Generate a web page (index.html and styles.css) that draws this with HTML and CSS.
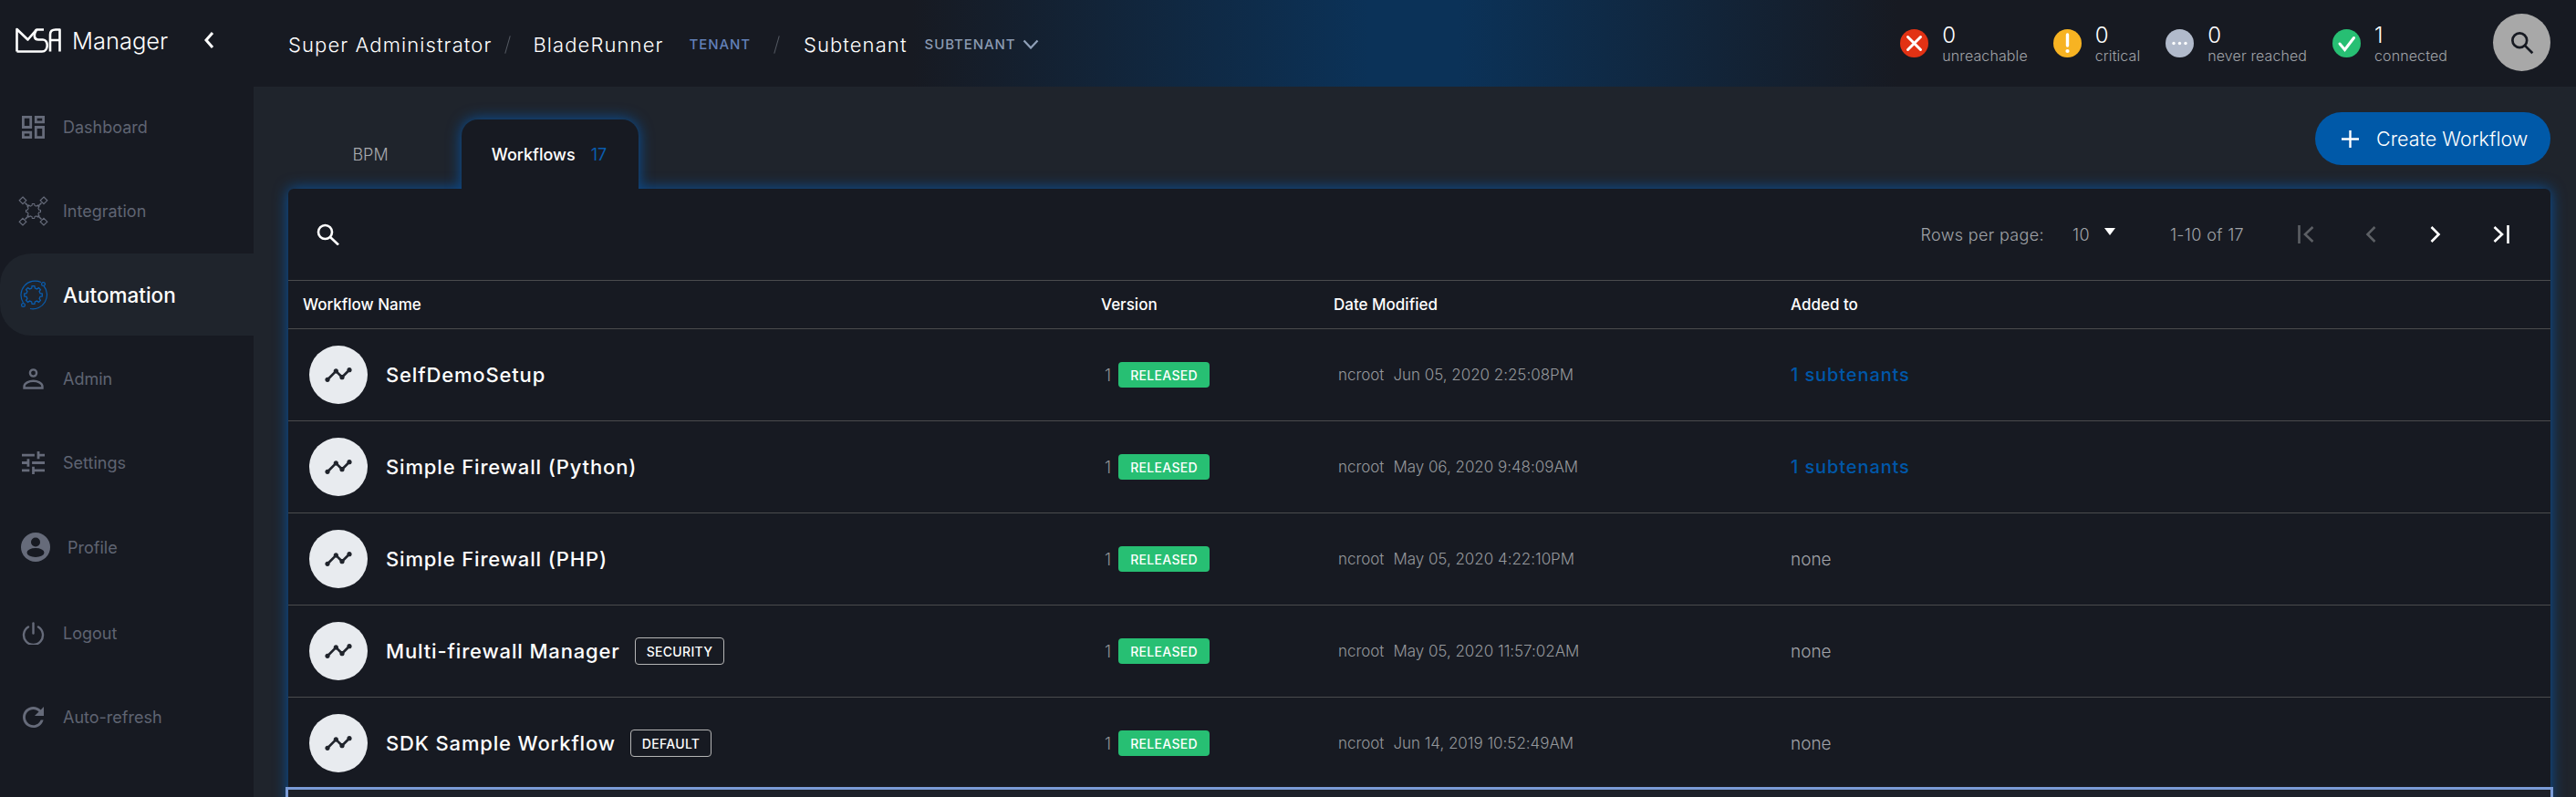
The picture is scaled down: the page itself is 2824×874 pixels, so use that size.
FILE: index.html
```html
<!DOCTYPE html>
<html lang="en">
  <head>
    <meta charset="UTF-8" />
    <title>MSA Manager - Automation</title>
    <link rel="stylesheet" href="styles.css">
  </head>
  <body>
    <svg class="defs" width="0" height="0">
      <symbol id="timeline" viewBox="0 0 24 24">
        <path d="M23 8c0 1.1-.9 2-2 2-.18 0-.35-.02-.51-.07l-3.56 3.55c.05.16.07.34.07.52 0 1.1-.9 2-2 2s-2-.9-2-2c0-.18.02-.36.07-.52l-2.55-2.55c-.16.05-.34.07-.52.07s-.36-.02-.52-.07l-4.55 4.56c.05.16.07.33.07.51 0 1.1-.9 2-2 2s-2-.9-2-2 .9-2 2-2c.18 0 .35.02.51.07l4.56-4.55C8.02 9.36 8 9.18 8 9c0-1.1.9-2 2-2s2 .9 2 2c0 .18-.02.36-.07.52l2.55 2.55c.16-.05.34-.07.52-.07s.36.02.52.07l3.55-3.56C19.02 8.35 19 8.18 19 8c0-1.1.9-2 2-2s2 .9 2 2z"/>
      </symbol>
      <symbol id="gear" viewBox="-10 -10 20 20">
        <polygon points="8.91,-1.25 8.91,1.25 6.79,1.69 6,3.6 7.19,5.42 5.42,7.19 3.6,6 1.69,6.79 1.25,8.91 -1.25,8.91 -1.69,6.79 -3.6,6 -5.42,7.19 -7.19,5.42 -6,3.6 -6.79,1.69 -8.91,1.25 -8.91,-1.25 -6.79,-1.69 -6,-3.6 -7.19,-5.42 -5.42,-7.19 -3.6,-6 -1.69,-6.79 -1.25,-8.91 1.25,-8.91 1.69,-6.79 3.6,-6 5.42,-7.19 7.19,-5.42 6,-3.6 6.79,-1.69"/>
      </symbol>
    </svg>

    <header class="topbar">
      <div class="brand">
        <svg class="logo" viewBox="0 0 50 28" fill="none" stroke="#fff" stroke-width="2.6" stroke-linejoin="round">
          <path d="M1.5 26.5V2L13.5 13.5 23 2.5H31"/>
          <path d="M23 2.5C19.5 8 20 13.5 25 13.5H30C36.500 13.500 36.500 26.500 29 26.500H1.500"/>
          <path d="M38 26.500V8C38 4 40 2.500 44 2.500H48.500V26.500M38 14H48.500"/>
        </svg>
        <span class="brand-name">Manager</span>
        <svg class="collapse" viewBox="0 0 12 20" fill="none" stroke="#fff" stroke-width="3"><path d="M10 2 3 10l7 8"/></svg>
      </div>
      <nav class="crumbs">
        <span>Super Administrator</span>
        <i class="sep"></i>
        <span>BladeRunner</span>
        <small class="crumb-tag tenant">TENANT</small>
        <i class="sep sep-2"></i>
        <span>Subtenant</span>
        <small class="crumb-tag subtenant">SUBTENANT</small>
        <svg class="crumb-chevron" viewBox="0 0 18 11" fill="none" stroke="#8fa0b8" stroke-width="2.200"><path d="M1.500 1.500 9 9.500l7.500-8"/></svg>
      </nav>
      <div class="status-list">
        <div class="status">
          <svg class="status-icon" viewBox="0 0 31 31"><circle cx="15.500" cy="15.500" r="15.500" fill="#e23214"/><path d="M8.500 8.500l14 14m0-14l-14 14" stroke="#fff" stroke-width="3" stroke-linecap="round"/></svg>
          <div class="status-text"><b>0</b><span>unreachable</span></div>
        </div>
        <div class="status">
          <svg class="status-icon" viewBox="0 0 31 31"><circle cx="15.500" cy="15.500" r="15.500" fill="#f7b322"/><path d="M15.500 6v12" stroke="#fff" stroke-width="3.400" stroke-linecap="round"/><circle cx="15.500" cy="24" r="2.100" fill="#fff"/></svg>
          <div class="status-text"><b>0</b><span>critical</span></div>
        </div>
        <div class="status">
          <svg class="status-icon" viewBox="0 0 31 31"><circle cx="15.500" cy="15.500" r="15.500" fill="#b1bacb"/><circle cx="9" cy="15.500" r="1.700" fill="#fff"/><circle cx="15.500" cy="15.500" r="1.700" fill="#fff"/><circle cx="22" cy="15.500" r="1.700" fill="#fff"/></svg>
          <div class="status-text"><b>0</b><span>never reached</span></div>
        </div>
        <div class="status">
          <svg class="status-icon" viewBox="0 0 31 31"><circle cx="15.500" cy="15.500" r="15.500" fill="#27bf73"/><path d="M8 16l5.500 6.500L23.500 9.500" fill="none" stroke="#fff" stroke-width="3" stroke-linecap="round"/></svg>
          <div class="status-text"><b>1</b><span>connected</span></div>
        </div>
      </div>
      <button class="global-search">
        <svg viewBox="0 0 24 24" fill="none" stroke="#171a22" stroke-width="2.400"><circle cx="10" cy="10" r="7"/><path d="M15 15l7.500 7.500"/></svg>
      </button>
    </header>

    <div class="page">
      <aside class="sidebar">
        <a class="nav-item">
          <span class="nav-slot"><svg class="icon-25" viewBox="3 3 18 18" fill="#666b7a"><path d="M19 5v2h-4V5h4M9 5v6H5V5h4m10 8v6h-4v-6h4M9 17v2H5v-2h4M21 3h-8v6h8V3zM11 3H3v10h8V3zm10 8h-8v10h8V11zm-10 4H3v6h8v-6z"/></svg></span>
          <span>Dashboard</span>
        </a>
        <a class="nav-item">
          <span class="nav-slot"><svg class="icon-33" viewBox="0 0 33 33" fill="none" stroke="#666b7a" stroke-width="1.200">
            <use href="#gear" x="7.500" y="7.500" width="18" height="18"/>
            <path d="M11.500 11.500 7.500 7.500M21.500 11.500l4-4M11.500 21.500l-4 4M21.500 21.500l4 4" stroke-width="1.500"/>
            <path d="M5 1l3.800 3.800L5 8.600 1.200 4.800zM28 1l3.800 3.800L28 8.600l-3.800-3.800zM5 24.400l3.800 3.800L5 32l-3.800-3.800zM28 24.400l3.800 3.800L28 32l-3.800-3.800z"/>
          </svg></span>
          <span>Integration</span>
        </a>
        <a class="nav-item active">
          <span class="nav-slot"><svg class="icon-33" viewBox="0 0 33 33" fill="none" stroke="#0a5cad" stroke-width="1.200">
            <use href="#gear" x="5.500" y="5.500" width="22" height="22"/>
            <path d="M28 6.500A15.500 15.500 0 0 1 13 31.500M5.500 25A15.500 15.500 0 0 1 25 2.500"/>
            <circle cx="27.500" cy="4.500" r="1.900"/>
            <circle cx="5.500" cy="27.500" r="1.900"/>
          </svg></span>
          <span>Automation</span>
        </a>
        <a class="nav-item">
          <span class="nav-slot"><svg class="icon-23" viewBox="0 0 23 23" fill="none" stroke="#666b7a" stroke-width="2.400"><circle cx="11.500" cy="5" r="3.600"/><path d="M1.500 21.500v-1.500C1.500 16 7 13.800 11.500 13.800S21.500 16 21.500 20v1.500z"/></svg></span>
          <span>Admin</span>
        </a>
        <a class="nav-item">
          <span class="nav-slot"><svg class="icon-25" viewBox="3 3 18 18" fill="#666b7a"><path d="M3 17v2h6v-2H3zM3 5v2h10V5H3zm10 16v-2h8v-2h-8v-2h-2v6h2zM7 9v2H3v2h4v2h2V9H7zm14 4v-2H11v2h10zm-6-4h2V7h4V5h-4V3h-2v6z"/></svg></span>
          <span>Settings</span>
        </a>
        <a class="nav-item nav-profile">
          <span class="nav-slot"><svg class="icon-32" viewBox="0 0 32 32"><circle cx="16" cy="16" r="16" fill="#666b7a"/><circle cx="16" cy="10.500" r="5" fill="#171a22"/><ellipse cx="16" cy="22" rx="9.500" ry="5" fill="#171a22"/></svg></span>
          <span>Profile</span>
        </a>
        <a class="nav-item nav-logout">
          <span class="nav-slot"><svg class="icon-25" viewBox="0 0 25 25" fill="none" stroke="#666b7a" stroke-width="2.400" stroke-linecap="round"><path d="M12.500 1.500v11"/><path d="M7 5.500a10.500 10.500 0 1 0 11 0"/></svg></span>
          <span>Logout</span>
        </a>
        <a class="nav-item">
          <span class="nav-slot"><svg class="icon-23" viewBox="4 4 16 16" fill="#666b7a"><path d="M17.650 6.350C16.200 4.900 14.210 4 12 4c-4.420 0-7.990 3.580-7.990 8s3.570 8 7.990 8c3.730 0 6.840-2.550 7.730-6h-2.080c-.82 2.330-3.040 4-5.650 4-3.310 0-6-2.690-6-6s2.690-6 6-6c1.660 0 3.140.69 4.220 1.780L13 11h7V4l-2.350 2.350z"/></svg></span>
          <span>Auto-refresh</span>
        </a>
      </aside>

      <main class="content">
        <div class="tabs">
          <a class="tab">BPM</a>
          <a class="tab tab-active">Workflows <em>17</em></a>
          <button class="create-btn">
            <svg viewBox="0 0 19 19" stroke="#fff" stroke-width="2.400"><path d="M9.500 0v19M0 9.500h19"/></svg>
            Create Workflow
          </button>
        </div>

        <section class="card">
          <div class="toolbar">
            <svg class="toolbar-search" viewBox="0 0 25 24" fill="none" stroke="#fff" stroke-width="2.600"><circle cx="9.500" cy="9.500" r="7.500"/><path d="M15 15l9 8.500"/></svg>
            <span class="rows-label">Rows per page:</span>
            <span class="rows-value">10</span>
            <i class="rows-caret"></i>
            <span class="rows-range">1-10 of 17</span>
            <svg class="pager pager-first" viewBox="0 0 18 20" fill="none" stroke="#5c5f64" stroke-width="2.600"><path d="M1.500 0v20M16.500 2 8 10l8.500 8"/></svg>
            <svg class="pager pager-prev" viewBox="0 0 12 20" fill="none" stroke="#5c5f64" stroke-width="2.600"><path d="M10.500 2 2.500 10l8 8"/></svg>
            <svg class="pager pager-next" viewBox="0 0 12 20" fill="none" stroke="#fff" stroke-width="2.600"><path d="M1.500 2l8 8-8 8"/></svg>
            <svg class="pager pager-last" viewBox="0 0 18 20" fill="none" stroke="#fff" stroke-width="2.600"><path d="M16.500 0v20M1.500 2 10 10l-8.500 8"/></svg>
          </div>

          <div class="table-row table-head">
            <div>Workflow Name</div>
            <div>Version</div>
            <div>Date Modified</div>
            <div>Added to</div>
          </div>

          <div class="table-row">
            <div class="wf-name"><span class="wf-icon"><svg><use href="#timeline"/></svg></span><b>SelfDemoSetup</b></div>
            <div class="wf-version">1<span class="released">RELEASED</span></div>
            <div class="wf-date"><span>ncroot</span>Jun 05, 2020 2:25:08PM</div>
            <a class="wf-added">1 subtenants</a>
          </div>
          <div class="table-row">
            <div class="wf-name"><span class="wf-icon"><svg><use href="#timeline"/></svg></span><b>Simple Firewall (Python)</b></div>
            <div class="wf-version">1<span class="released">RELEASED</span></div>
            <div class="wf-date"><span>ncroot</span>May 06, 2020 9:48:09AM</div>
            <a class="wf-added">1 subtenants</a>
          </div>
          <div class="table-row">
            <div class="wf-name"><span class="wf-icon"><svg><use href="#timeline"/></svg></span><b>Simple Firewall (PHP)</b></div>
            <div class="wf-version">1<span class="released">RELEASED</span></div>
            <div class="wf-date"><span>ncroot</span>May 05, 2020 4:22:10PM</div>
            <div class="wf-none">none</div>
          </div>
          <div class="table-row">
            <div class="wf-name"><span class="wf-icon"><svg><use href="#timeline"/></svg></span><b>Multi-firewall Manager</b><span class="wf-tag">SECURITY</span></div>
            <div class="wf-version">1<span class="released">RELEASED</span></div>
            <div class="wf-date"><span>ncroot</span>May 05, 2020 11:57:02AM</div>
            <div class="wf-none">none</div>
          </div>
          <div class="table-row">
            <div class="wf-name"><span class="wf-icon"><svg><use href="#timeline"/></svg></span><b>SDK Sample Workflow</b><span class="wf-tag">DEFAULT</span></div>
            <div class="wf-version">1<span class="released">RELEASED</span></div>
            <div class="wf-date"><span>ncroot</span>Jun 14, 2019 10:52:49AM</div>
            <div class="wf-none">none</div>
          </div>
          <div class="table-row row-selected"></div>
        </section>
      </main>
    </div>
  </body>
</html>
```

FILE: styles.css
```css
* {
  box-sizing: border-box;
}

html,
body {
  margin: 0;
  height: 874px;
  overflow: hidden;
}

body {
  font-family: Inter, "Noto Sans", sans-serif;
  background: #171a22;
  color: #fff;
}

.defs {
  position: absolute;
}

/* top bar */
.topbar {
  display: flex;
  align-items: center;
  height: 95px;
  padding-right: 28px;
  background: linear-gradient(90deg, #171a22 1000px, #0b3258 1500px, #0b3258 1600px, #171a22 2080px);
}

.brand {
  display: flex;
  align-items: center;
  width: 316px;
  padding: 0 0 7px 17px;
}

.logo {
  width: 50px;
  height: 28px;
}

.brand-name {
  margin-left: 12px;
  font-size: 25.500px;
  font-weight: 300;
}

.collapse {
  width: 12px;
  height: 20px;
  margin-left: 39px;
}

.crumbs {
  display: flex;
  align-items: center;
  font-size: 22px;
  font-weight: 300;
  letter-spacing: 1.100px;
  padding-top: 2px;
}

.sep {
  width: 1px;
  height: 20px;
  margin: 0 27px 0 17px;
  background: #555a63;
  transform: rotate(16deg);
}

.sep-2 {
  margin: 0 29px 0 28px;
}

.crumb-tag {
  font-size: 15px;
  font-weight: 500;
  letter-spacing: 0.9px;
}

.tenant {
  margin-left: 28px;
  color: #6280b8;
}

.subtenant {
  margin-left: 19px;
  color: #8a9ab2;
}

.crumb-chevron {
  width: 18px;
  height: 11px;
  margin-left: 8px;
}

.status-list {
  display: flex;
  margin-left: auto;
}

.status {
  display: flex;
  align-items: center;
  gap: 15px;
  margin-right: 28px;
}

.status-icon {
  width: 31px;
  height: 31px;
}

.status-text {
  display: flex;
  flex-direction: column;
}

.status-text b {
  font-size: 24px;
  font-weight: 300;
  line-height: 27px;
}

.status-text span {
  font-size: 16px;
  font-weight: 300;
  line-height: 18px;
  letter-spacing: 0.1px;
  color: #a0a3a8;
}

.global-search {
  display: flex;
  align-items: center;
  justify-content: center;
  width: 63px;
  height: 63px;
  margin: -3px 0 0 22px;
  padding: 0;
  border: 0;
  border-radius: 50%;
  background: #a8a8a8;
}

.global-search svg {
  width: 27px;
  height: 27px;
}

/* sidebar */
.page {
  display: flex;
  height: 779px;
}

.sidebar {
  display: flex;
  flex-direction: column;
  gap: 4px;
  flex: none;
  width: 278px;
}

.nav-item {
  display: flex;
  align-items: center;
  height: 88px;
  font-size: 18px;
  color: #5f6472;
}

.nav-slot {
  display: flex;
  justify-content: center;
  flex: none;
  width: 72px;
  margin-right: -3px;
}

.icon-23 {
  width: 23px;
  height: 23px;
}

.icon-25 {
  width: 25px;
  height: 25px;
}

.icon-32 {
  width: 32px;
  height: 32px;
}

.icon-33 {
  width: 33px;
  height: 33px;
}

.nav-item.active {
  height: 90px;
  margin: -1px 0;
  border-radius: 34px 0 0 34px;
  background: #1f242c;
  font-size: 22.500px;
  font-weight: 500;
  color: #fff;
}

.nav-profile {
  margin-top: 1px;
}

.nav-profile .nav-slot {
  width: 78px;
  margin-right: -4px;
}

.nav-logout {
  margin-top: 2px;
}

/* main area */
.content {
  flex: 1;
  padding: 36px 28px 0 38px;
  background: #1f242c;
  overflow: hidden;
}

.tabs {
  display: flex;
  height: 76px;
}

.tab {
  display: flex;
  align-items: center;
  justify-content: center;
  width: 190px;
  padding-right: 10px;
  font-size: 18px;
  font-weight: 300;
  color: #a7a9ad;
}

.tab-active {
  position: relative;
  z-index: 1;
  width: 194px;
  padding: 0 2px 0 0;
  gap: 17px;
  border-radius: 18px 18px 0 0;
  background: #171a22;
  box-shadow: 0 0 16px rgba(5, 90, 175, 0.9);
  clip-path: inset(-20px -20px 0 -20px);
  font-weight: 500;
  color: #fff;
}

.tab-active em {
  font-style: normal;
  font-weight: 400;
  color: #0a5cad;
}

.create-btn {
  display: flex;
  align-items: center;
  gap: 19px;
  width: 258px;
  height: 58px;
  margin: -8px 0 0 auto;
  padding: 0 0 0 29px;
  border: 0;
  border-radius: 29px;
  background: #0059a8;
  font-family: inherit;
  font-size: 21.500px;
  font-weight: 300;
  white-space: nowrap;
  color: #fff;
}

.create-btn svg {
  width: 19px;
  height: 19px;
}

.card {
  height: 700px;
  border-radius: 6px 6px 0 0;
  background: #171a22;
  box-shadow: 0 0 16px rgba(5, 90, 175, 0.9);
}

.toolbar {
  display: flex;
  align-items: center;
  height: 101px;
  padding: 0 45px 0 31px;
  border-bottom: 1px solid #4a4b4d;
  font-size: 18px;
  font-weight: 300;
  letter-spacing: 0.35px;
  color: #a0a3a8;
}

.toolbar-search {
  width: 25px;
  height: 24px;
}

.rows-label {
  margin-left: auto;
}

.rows-value {
  margin-left: 31px;
}

.rows-caret {
  width: 0;
  height: 0;
  margin: -6px 0 0 16px;
  border: 6.500px solid transparent;
  border-top: 8px solid #fff;
  border-bottom: 0;
}

.rows-range {
  margin-left: 60px;
}

.pager {
  height: 20px;
}

.pager-first {
  width: 18px;
  margin-left: 59px;
}

.pager-prev {
  width: 12px;
  margin-left: 56px;
}

.pager-next {
  width: 12px;
  margin-left: 59px;
}

.pager-last {
  width: 18px;
  margin-left: 57px;
}

/* table */
.table-row {
  display: grid;
  grid-template-columns: 875px 255px 501px 1fr;
  align-items: center;
  height: 101px;
  padding-left: 16px;
  border-bottom: 1px solid #4a4b4d;
}

.table-head {
  height: 53px;
  font-size: 17px;
  font-weight: 500;
}

.wf-name {
  display: flex;
  align-items: center;
  padding-left: 7px;
  font-size: 22px;
}

.wf-name b {
  font-weight: 500;
  letter-spacing: 0.85px;
}

.wf-icon {
  display: flex;
  align-items: center;
  justify-content: center;
  width: 64px;
  height: 64px;
  margin-right: 20px;
  border-radius: 50%;
  background: #e8ebef;
}

.wf-icon svg {
  width: 32px;
  height: 32px;
  fill: #20242c;
}

.wf-tag {
  display: flex;
  align-items: center;
  justify-content: center;
  height: 30px;
  margin-left: 16px;
  padding: 0 12px;
  border: 1px solid #b5b5b5;
  border-radius: 4px;
  font-size: 14px;
  font-weight: 500;
  letter-spacing: 0.3px;
}

.wf-version {
  display: flex;
  align-items: center;
  padding-left: 4px;
  font-size: 18px;
  font-weight: 300;
  color: #8f9296;
}

.released {
  display: flex;
  align-items: center;
  justify-content: center;
  width: 100px;
  height: 28px;
  margin-left: 8px;
  border-radius: 4px;
  background: #27bf73;
  font-size: 14px;
  font-weight: 500;
  letter-spacing: 0.3px;
  color: #fff;
}

.wf-date {
  padding-left: 5px;
  font-size: 17px;
  font-weight: 300;
  letter-spacing: -0.03px;
  color: #95989c;
}

.wf-date span {
  margin-right: 10px;
}

.wf-added {
  font-size: 20px;
  font-weight: 500;
  letter-spacing: 0.9px;
  color: #0057a8;
}

.wf-none {
  font-size: 19px;
  font-weight: 300;
  color: #a0a3a8;
}

.row-selected {
  border: 0;
  background: #1c2029;
  outline: 3px solid #7b9bd6;
}
```
